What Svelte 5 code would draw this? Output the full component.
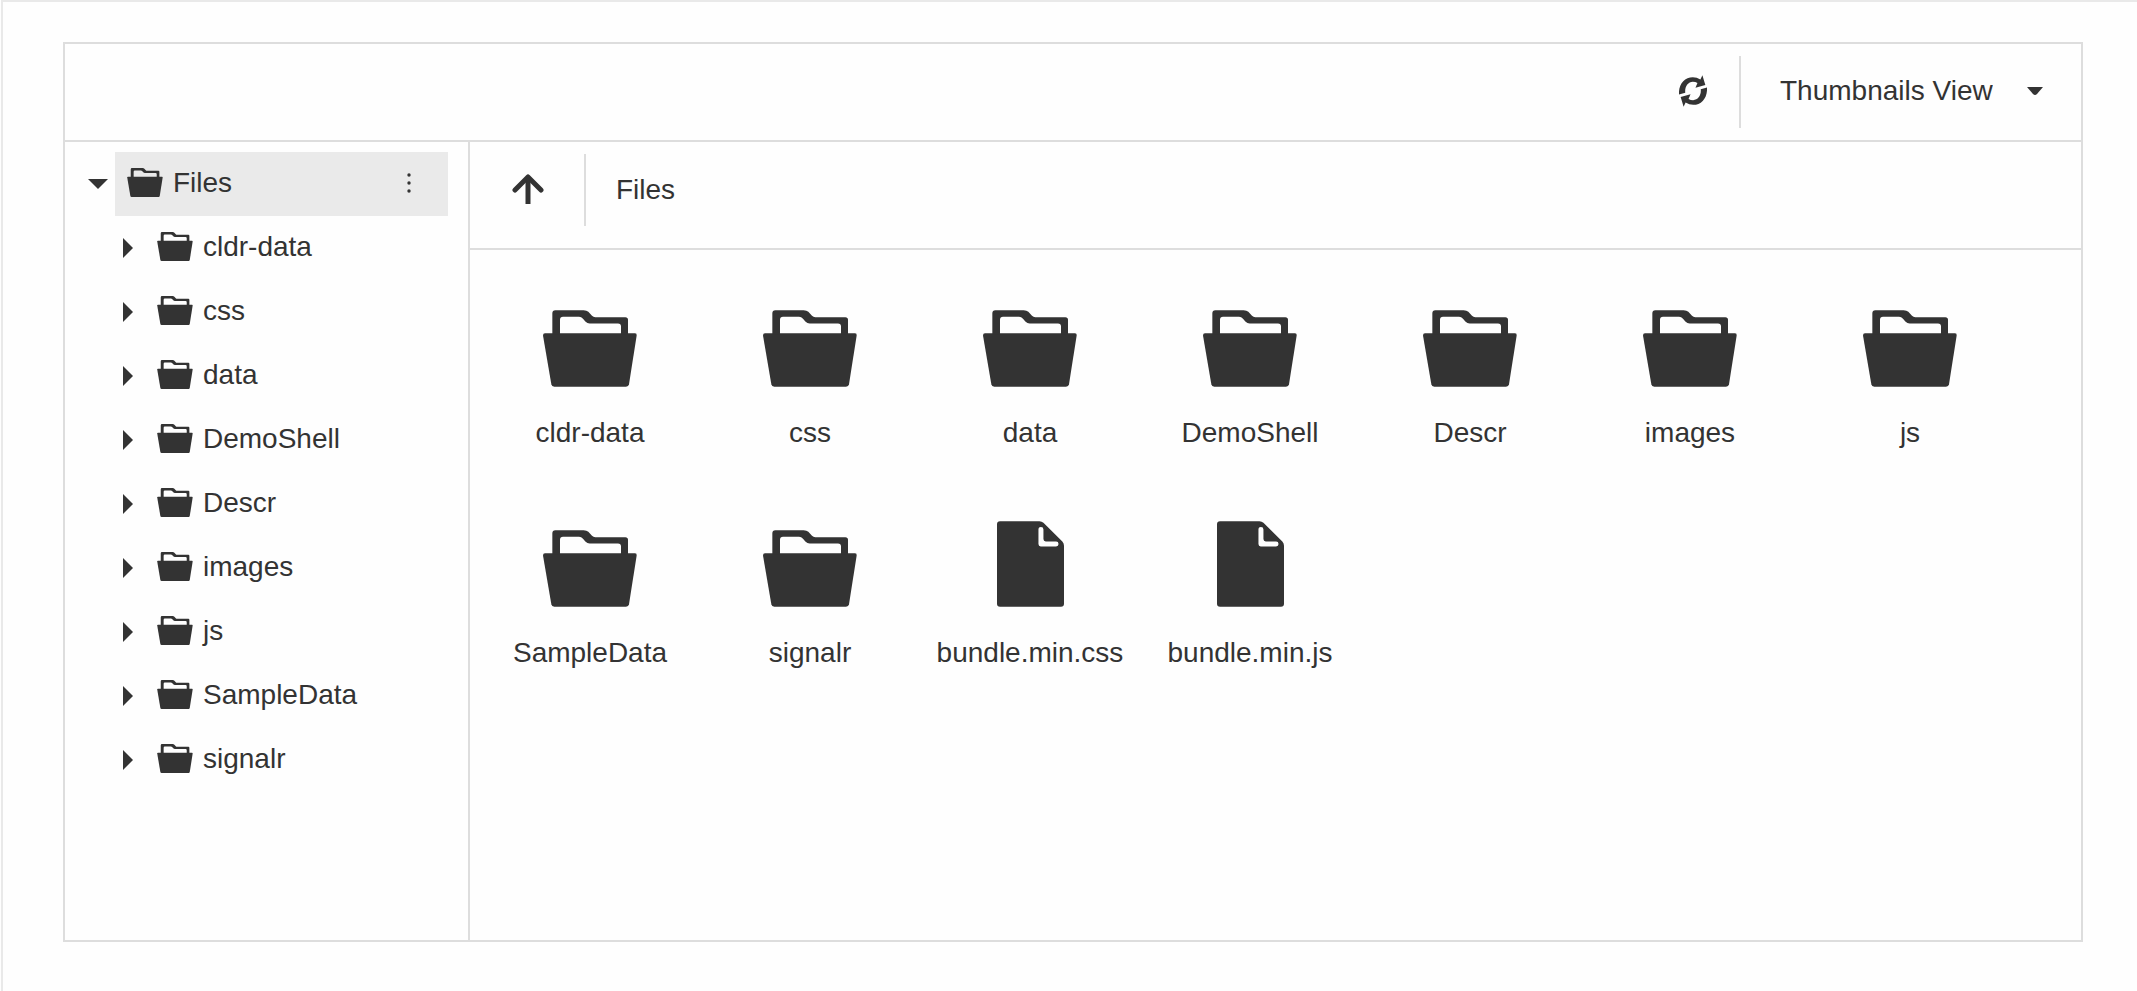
<script>
	const folders = ['cldr-data', 'css', 'data', 'DemoShell', 'Descr', 'images', 'js', 'SampleData', 'signalr'];
	const files = ['bundle.min.css', 'bundle.min.js'];

	const items = [
		...folders.map((name) => ({ name, folder: true })),
		...files.map((name) => ({ name, folder: false }))
	];

	let view = $state('thumbnails');
	let expanded = $state(true);
</script>

{#snippet folderIcon()}
	<svg class="folder" viewBox="0 0 282 230" aria-hidden="true">
		<path d="M6 69H276Q282 69 281 76L258 222Q256 230 249 230H34Q27 230 25 222L0 76Q0 69 6 69Z" />
		<path d="M28 72V9Q28 0 37 0H122Q131 0 136 5L147 17Q151 21 157 21H247Q255 21 255 29V72H234V49Q234 40 225 40H140Q133 40 127 34L120 26Q115 20 108 20H60Q51 20 51 29V72Z" />
	</svg>
{/snippet}

<div class="page">
	<div class="manager">
		<header class="toolbar">
			<button class="refresh" aria-label="Refresh">
				<svg viewBox="0 0 85 96" aria-hidden="true">
					<path d="M0 59C-2 28 16 6 42 6Q54 6 65 13L71 0L80 30L50 38L56 24Q50 20 42 20C27 21 17 35 19 53Z" />
					<path d="M85 37C87 68 69 90 43 90Q31 90 20 83L14 96L5 66L35 58L29 72Q35 76 43 76C58 75 68 61 66 43Z" />
				</svg>
			</button>
			<div class="view">
				<select bind:value={view} aria-label="View mode">
					<option value="thumbnails">Thumbnails View</option>
					<option value="details">Details View</option>
				</select>
				<svg class="caret" viewBox="0 0 16 8" aria-hidden="true"><path d="M0 0H16L10 7Q8 9 6 7Z" /></svg>
			</div>
		</header>

		<div class="content">
			<nav class="sidebar" aria-label="Folders">
				<div class="row">
					<button class="toggle" aria-label="Toggle Files" onclick={() => (expanded = !expanded)}>
						<svg width="20" height="10" viewBox="0 0 20 10"><path d="M0 0H20L10 10Z" /></svg>
					</button>
					<div class="item selected">
						<a href="#files">{@render folderIcon()}Files</a>
						<button class="menu" aria-label="Folder actions">
							<svg width="4" height="20" viewBox="0 0 4 20">
								<circle cx="2" cy="2" r="1.7" />
								<circle cx="2" cy="10" r="1.7" />
								<circle cx="2" cy="18" r="1.7" />
							</svg>
						</button>
					</div>
				</div>
				{#if expanded}
					<ul>
						{#each folders as name}
							<li class="row">
								<button class="toggle" aria-label="Expand {name}">
									<svg width="10" height="20" viewBox="0 0 10 20"><path d="M0 0L10 10L0 20Z" /></svg>
								</button>
								<div class="item">
									<a href="#{name}">{@render folderIcon()}{name}</a>
								</div>
							</li>
						{/each}
					</ul>
				{/if}
			</nav>

			<main>
				<div class="breadcrumbs">
					<button class="up" aria-label="Parent folder">
						<svg width="32" height="30" viewBox="0 0 32 30">
							<path d="M3 16L16 3L29 16" fill="none" stroke="#333" stroke-width="5" stroke-linecap="round" stroke-linejoin="round" />
							<path d="M14 4H18V30H14Z" stroke="#333" stroke-width="1" />
						</svg>
					</button>
					<a href="#files">Files</a>
				</div>
				<div class="thumbs">
					{#each items as item}
						<button class="thumb">
							<span class="icon">
								{#if item.folder}
									{@render folderIcon()}
								{:else}
									<svg class="file" viewBox="0 0 202 258" aria-hidden="true">
										<path d="M9 0H128Q135 0 140 5L197 61Q202 66 202 74V249Q202 258 193 258H9Q0 258 0 249V9Q0 0 9 0Z" />
										<path fill="#fefefe" d="M125 25A7.5 7.5 0 0 1 140 25V54Q140 61 147 61H178A7.5 7.5 0 0 1 178 76H132Q125 76 125 69Z" />
									</svg>
								{/if}
							</span>
							<span>{item.name}</span>
						</button>
					{/each}
				</div>
			</main>
		</div>
	</div>
</div>

<style>
	:global(body) {
		margin: 0;
		background: #fefefe;
	}

	.page {
		display: flex;
		box-sizing: border-box;
		min-height: 100vh;
		margin-left: 1px;
		padding: 40px 54px 49px 60px;
		border: solid #e9e9e9;
		border-width: 2px 0 0 2px;
		font: 28px/40px "Helvetica Neue", "Liberation Sans", Arial, sans-serif;
		color: #333;
	}

	.manager {
		flex: 1;
		display: flex;
		flex-direction: column;
		border: 2px solid #ddd;
	}

	button, select {
		margin: 0;
		padding: 0;
		border: 0;
		background: none;
		font: inherit;
		color: inherit;
		cursor: pointer;
	}

	a {
		color: inherit;
		text-decoration: none;
	}

	svg {
		display: block;
		flex: none;
		fill: #333;
	}

	.toolbar {
		display: flex;
		justify-content: flex-end;
		padding: 12px 0;
		border-bottom: 2px solid #ddd;
	}

	.refresh {
		display: flex;
		align-items: center;
		justify-content: center;
		width: 92px;
		padding-bottom: 3px;
	}

	.refresh svg {
		width: 28px;
		height: 32px;
	}

	.view {
		position: relative;
		height: 72px;
		border-left: 2px solid #ddd;
	}

	select {
		appearance: none;
		height: 72px;
		padding: 0 88px 3px 39px;
	}

	.caret {
		position: absolute;
		top: 31px;
		right: 38px;
		width: 16px;
		height: 8px;
		pointer-events: none;
	}

	.content {
		flex: 1;
		display: flex;
	}

	.sidebar {
		flex: none;
		box-sizing: border-box;
		width: 405px;
		padding: 10px 20px 10px 15px;
		border-right: 2px solid #ddd;
	}

	ul {
		margin: 0;
		padding: 0 0 0 30px;
		list-style: none;
	}

	.row {
		display: flex;
		height: 64px;
	}

	.toggle {
		display: flex;
		align-items: center;
		justify-content: center;
		width: 35px;
	}

	.item {
		flex: 1;
		display: flex;
		align-items: center;
	}

	.item a {
		flex: 1;
		display: flex;
		align-items: center;
		gap: 10px;
		padding: 0 0 3px 12px;
	}

	.item .folder {
		width: 36px;
		height: 29px;
	}

	.selected {
		background: #eaeaea;
	}

	.menu {
		display: flex;
		justify-content: center;
		width: 36px;
		margin-right: 21px;
		padding-bottom: 3px;
	}

	main {
		flex: 1;
		min-width: 0;
	}

	.breadcrumbs {
		display: flex;
		align-items: center;
		height: 72px;
		padding: 12px 0 22px;
		border-bottom: 2px solid #ddd;
	}

	.up {
		display: flex;
		align-items: center;
		justify-content: center;
		width: 116px;
		height: 72px;
		padding: 0 0 3px 2px;
		border-right: 2px solid #ddd;
	}

	.breadcrumbs a {
		padding-left: 30px;
	}

	.thumbs {
		display: grid;
		grid-template-columns: repeat(auto-fill, 220px);
		padding: 10px;
	}

	.thumb {
		display: flex;
		flex-direction: column;
		align-items: center;
		gap: 26px;
		height: 220px;
		padding-top: 31px;
	}

	.icon {
		display: flex;
		align-items: flex-end;
		height: 96px;
	}

	.icon .folder {
		width: 94px;
		height: 77px;
	}

	.file {
		width: 67px;
		height: 86px;
	}
</style>
